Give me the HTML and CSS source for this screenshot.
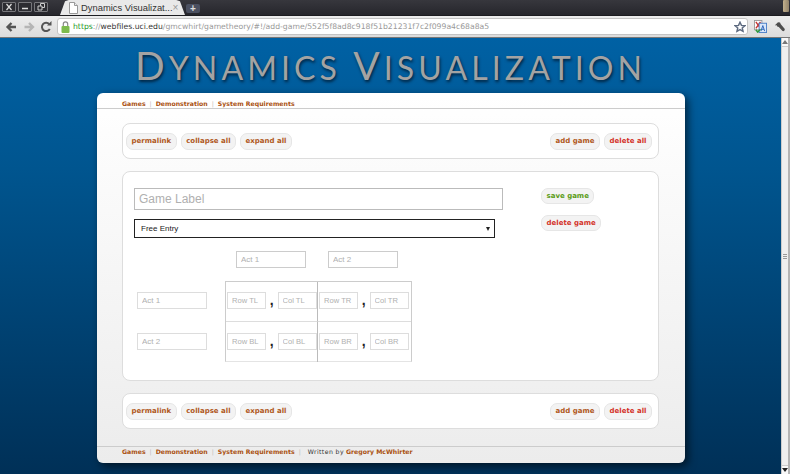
FILE: index.html
```html
<!DOCTYPE html>
<html lang="en">
<head>
    <meta charset="UTF-8">
    <meta name="viewport" content="width=device-width, initial-scale=1.0">
    <title>Dynamics Visualization</title>
    <link rel="stylesheet" href="styles.css">
</head>
<body>
    <div class="titlebar">
        <div class="window-buttons">
            <span class="win-btn">
                <svg width="12" height="8" viewBox="0 0 12 8"><path d="M3.500 1 8.500 7M8.500 1 3.500 7" stroke="#ddd" stroke-width="1.200"/></svg>
            </span>
            <span class="win-btn">
                <svg width="12" height="8" viewBox="0 0 12 8"><path d="M3 5.500h6" stroke="#ddd" stroke-width="1.500"/></svg>
            </span>
            <span class="win-btn">
                <svg width="12" height="8" viewBox="0 0 12 8"><path d="M5.500 .5h4v4h-4z" fill="none" stroke="#ccc"/><path d="M3 3h4v4H3z" fill="#2c2c31" stroke="#ccc"/></svg>
            </span>
        </div>
        <div class="tab">
            <svg class="tab-icon" width="9" height="12" viewBox="0 0 9 12"><path d="M.5.500h5l3 3v8h-8z" fill="#fff" stroke="#999"/><path d="M5.500.500v3h3" fill="#eee" stroke="#999"/></svg>
            <span class="tab-title">Dynamics Visualizat...</span>
            <span class="tab-close">&#215;</span>
        </div>
        <div class="new-tab">+</div>
        <div class="titlebar-grip"></div>
    </div>

    <div class="toolbar">
        <svg class="nav-icon" width="16" height="16" viewBox="0 0 16 16"><path d="M13 8H5M8.500 4 4.500 8l4 4" fill="none" stroke="#555" stroke-width="2.300"/></svg>
        <svg class="nav-icon" width="16" height="16" viewBox="0 0 16 16"><path d="M3.500 8h8M8 4l4 4-4 4" fill="none" stroke="#b5b5b5" stroke-width="2.300"/></svg>
        <svg class="nav-icon" width="16" height="16" viewBox="0 0 16 16"><path d="M11.800 10A4.200 4.200 0 1 1 11.200 5" fill="none" stroke="#555" stroke-width="2"/><path d="M9 6.500h4.500V2z" fill="#555"/></svg>
        <div class="omnibox">
            <svg class="lock" width="9" height="12" viewBox="0 0 9 12"><path d="M2.300 5V3a2.200 2.200 0 0 1 4.400 0v2" fill="none" stroke="#8a8a8a" stroke-width="1.200"/><rect x="0.500" y="5" width="8" height="7" rx="1" fill="#7dbb4d"/></svg>
            <span class="url"><span class="url-https">https</span>://<span class="url-host">webfiles.uci.edu</span>/gmcwhirt/gametheory/#!/add-game/552f5f8ad8c918f51b21231f7c2f099a4c68a8a5</span>
            <svg class="star" width="12" height="12" viewBox="0 0 15 15"><path d="M7.500 1.500 9.300 5.500l4.200.4-3.200 2.800 1 4.200-3.800-2.200-3.800 2.200 1-4.200L1.500 5.900l4.200-.4z" fill="#fff" stroke="#5d6a80" stroke-width="1.800"/></svg>
        </div>
        <svg class="ext-icon" width="13" height="13" viewBox="0 0 14 14"><rect x="0.500" y="0.500" width="8" height="10" fill="#fff" stroke="#999"/><path d="M2 2l5 7M7 2 2 9" stroke="#c8322d" stroke-width="1.500"/><rect x="5.500" y="3.500" width="8" height="10" fill="#d8e6fa" stroke="#4a7fc8"/><path d="M7.500 12 9.500 6l2 6M8.300 10h2.400" fill="none" stroke="#2a62b8"/><path d="M2 10.500l2 2.500 3-3" fill="none" stroke="#2f9a3c" stroke-width="1.600"/></svg>
        <svg class="wrench" width="12" height="12" viewBox="0 0 15 15"><path d="M1.500 5 5 1.500l2.500.5 1 2L13 9.500c1 1 .3 2-.2 2.600-.6.600-1.500 1.100-2.500.1L6 7.500l-2-.5-.5-2L2.500 6z" fill="#4d4d4d"/></svg>
    </div>

    <div class="viewport">
        <div class="page">
            <h1 class="site-title"><span class="cap">D</span>ynamics <span class="cap">V</span>isualization</h1>

            <div class="wrapper">
                <div class="top-nav">
                    <a>Games</a><span class="sep">|</span><a>Demonstration</a><span class="sep">|</span><a>System Requirements</a>
                </div>

                <div class="content">
                    <div class="panel action-bar">
                        <div class="btn-group">
                            <a class="btn">permalink</a>
                            <a class="btn">collapse all</a>
                            <a class="btn">expand all</a>
                        </div>
                        <div class="btn-group">
                            <a class="btn">add game</a>
                            <a class="btn btn-red">delete all</a>
                        </div>
                    </div>

                    <div class="panel game-panel">
                        <div class="game-form">
                            <input class="game-label" type="text" placeholder="Game Label">
                            <div class="game-select">
                                <span>Free Entry</span>
                                <span class="select-arrow"></span>
                            </div>

                            <div class="matrix">
                                <div></div>
                                <div class="col-heads">
                                    <input class="act-input" type="text" placeholder="Act 1">
                                    <input class="act-input" type="text" placeholder="Act 2">
                                </div>
                                <div class="row-heads">
                                    <input class="act-input" type="text" placeholder="Act 1">
                                    <input class="act-input" type="text" placeholder="Act 2">
                                </div>
                                <div class="payoffs">
                                    <div class="cell">
                                        <input class="pay-input" type="text" placeholder="Row TL"><span class="comma">,</span><input class="pay-input" type="text" placeholder="Col TL">
                                    </div>
                                    <div class="cell">
                                        <input class="pay-input" type="text" placeholder="Row TR"><span class="comma">,</span><input class="pay-input" type="text" placeholder="Col TR">
                                    </div>
                                    <div class="cell">
                                        <input class="pay-input" type="text" placeholder="Row BL"><span class="comma">,</span><input class="pay-input" type="text" placeholder="Col BL">
                                    </div>
                                    <div class="cell">
                                        <input class="pay-input" type="text" placeholder="Row BR"><span class="comma">,</span><input class="pay-input" type="text" placeholder="Col BR">
                                    </div>
                                </div>
                            </div>
                        </div>
                        <div class="game-actions">
                            <a class="btn btn-small btn-green">save game</a>
                            <a class="btn btn-small btn-red">delete game</a>
                        </div>
                    </div>

                    <div class="panel action-bar">
                        <div class="btn-group">
                            <a class="btn">permalink</a>
                            <a class="btn">collapse all</a>
                            <a class="btn">expand all</a>
                        </div>
                        <div class="btn-group">
                            <a class="btn">add game</a>
                            <a class="btn btn-red">delete all</a>
                        </div>
                    </div>
                </div>

                <div class="footer">
                    <a>Games</a><span class="sep">|</span><a>Demonstration</a><span class="sep">|</span><a>System Requirements</a><span class="sep">|</span><span class="written"><span class="written-by">Written by</span> <a>Gregory McWhirter</a></span>
                </div>
            </div>
        </div>

        <div class="scrollbar">
            <div class="scroll-btn"><span class="arrow-up"></span></div>
            <div class="scroll-track"><div class="scroll-grip"></div></div>
            <div class="scroll-btn scroll-btn-down"><span class="arrow-down"></span></div>
        </div>
    </div>
</body>
</html>
```

FILE: styles.css
```css
* {
    box-sizing: border-box;
}

html, body {
    margin: 0;
    height: 100%;
    overflow: hidden;
}

body {
    width: 790px;
    height: 474px;
    display: flex;
    flex-direction: column;
    font-family: "Liberation Sans", Arial, sans-serif;
    background: #2a2a30;
}

/* browser chrome */
.titlebar {
    height: 15px;
    display: flex;
    align-items: flex-end;
    background: linear-gradient(#37373d, #26262c);
}

.window-buttons {
    display: flex;
    gap: 2px;
    align-self: flex-start;
    margin: 2px 12px 0 2px;
}

.win-btn {
    width: 14px;
    height: 10px;
    border: 1px solid #77777b;
    border-radius: 1px;
    background: #2c2c31;
    display: flex;
}

.tab {
    width: 125px;
    height: 15px;
    display: flex;
    align-items: center;
    padding: 0 8px 0 9px;
    background: #e9e9e9;
    border-radius: 5px 5px 0 0;
    clip-path: polygon(0 100%, 4% 8%, 7% 0, 93% 0, 96% 8%, 100% 100%);
}

.tab-icon {
    flex: none;
}

.tab-title {
    margin-left: 3px;
    font-size: 9.400px;
    color: #333;
    white-space: nowrap;
}

.tab-close {
    margin-left: auto;
    color: #999;
    font-size: 10px;
}

.new-tab {
    width: 14px;
    height: 9px;
    margin: 0 0 2px 1px;
    border-radius: 2px;
    background: #4b5060;
    color: #ddd;
    font-size: 10px;
    font-weight: bold;
    line-height: 9px;
    text-align: center;
}

.titlebar-grip {
    width: 6px;
    height: 12px;
    margin: 0 1px 3px auto;
    border-radius: 1px;
    background: linear-gradient(90deg, #c2b08c, #92836a);
}

.toolbar {
    height: 23px;
    display: flex;
    align-items: center;
    background: linear-gradient(#ededed, #dcdcdc);
    border-top: 1px solid #1c1c20;
    border-bottom: 1px solid #777;
    padding-left: 3px;
}

.nav-icon {
    margin-right: 1.500px;
    flex: none;
}

.omnibox {
    width: 691px;
    height: 17px;
    display: flex;
    align-items: center;
    padding: 0 1px 0 3px;
    margin-left: 1.500px;
    background: #fff;
    border: 1px solid #c4c4c4;
    border-radius: 3px;
}

.lock {
    flex: none;
}

.url {
    margin-left: 3px;
    font-family: "DejaVu Sans", sans-serif;
    font-size: 7.700px;
    color: #999;
    white-space: nowrap;
}

.url-https {
    color: #2a9a2a;
}

.url-host {
    color: #333;
}

.star {
    margin-left: auto;
    flex: none;
}

.ext-icon {
    margin-left: 6px;
    flex: none;
}

.wrench {
    margin-left: 7px;
    flex: none;
}

/* page */
.viewport {
    height: 436px;
    display: flex;
}

.page {
    flex: 1;
    height: 436px;
    overflow: hidden;
    background: linear-gradient(#0061a4, #00558f 30%, #003057);
}

.site-title {
    margin: 0;
    height: 55px;
    padding-top: 5px;
    font-family: "Lato", "Open Sans", sans-serif;
    font-size: 32px;
    line-height: 44px;
    font-weight: 400;
    text-transform: uppercase;
    letter-spacing: 4.100px;
    text-align: center;
    color: #a3a3a3;
    text-shadow: 1px 2px 3px #00233f;
}

.cap {
    font-size: 39px;
}

.wrapper {
    width: 588px;
    height: 370px;
    margin-left: 97px;
    background: linear-gradient(#fff, #ececec);
    border-radius: 6px;
    box-shadow: 3px 3px 9px rgba(0, 0, 0, 0.6);
}

.top-nav, .footer {
    display: flex;
    align-items: center;
    padding-left: 25px;
    font-family: "DejaVu Sans", sans-serif;
    font-size: 6.200px;
    font-weight: bold;
    color: #a9500f;
}

.top-nav {
    height: 16px;
    padding-top: 6px;
    border-bottom: 1px solid #ccc;
}

.footer {
    height: 17px;
    padding-bottom: 7px;
    border-top: 1px solid #ccc;
}

.sep {
    margin: 0 4px;
    font-weight: normal;
    color: #bbb;
}

.written {
    margin-left: 3px;
    font-weight: normal;
    color: #333;
}

.written-by {
    letter-spacing: 0.400px;
}

.written a {
    font-weight: bold;
    color: #a9500f;
}

.content {
    height: 337px;
    padding: 14px 26px 0 25px;
    display: flex;
    flex-direction: column;
    gap: 12px;
}

.panel {
    background: #fff;
    border: 1px solid #ddd;
    border-radius: 8px;
}

.action-bar {
    height: 36px;
    flex: none;
    display: flex;
    justify-content: space-between;
    align-items: center;
    padding: 0 6px 0 3px;
}

.btn-group {
    display: flex;
    gap: 4px;
}

.btn {
    height: 17px;
    padding: 0 4.500px;
    display: flex;
    align-items: center;
    background: #f3f3f3;
    border: 1px solid #e6e6e6;
    border-radius: 7px;
    font-family: "DejaVu Sans", sans-serif;
    font-size: 7px;
    font-weight: bold;
    color: #b0581c;
}

.btn-red {
    color: #d3342a;
}

.btn-green {
    color: #5b9c16;
}

.btn-small {
    height: 16px;
}

.game-panel {
    height: 210px;
    flex: none;
    display: flex;
    padding: 16px 0 0 11px;
}

.game-form {
    width: 407px;
    flex: none;
}

.game-actions {
    display: flex;
    flex-direction: column;
    align-items: flex-start;
    gap: 11px;
}

.game-label {
    width: 369px;
    height: 22px;
    display: block;
    padding: 0 4px;
    border: 1px solid #bbb;
    font-family: "Liberation Sans", Arial, sans-serif;
    font-size: 12px;
}

input::placeholder {
    color: #b0b0b0;
    opacity: 1;
}

.game-select {
    width: 361px;
    height: 19px;
    margin-top: 9px;
    display: flex;
    justify-content: space-between;
    align-items: center;
    padding: 0 4px 0 6px;
    border: 1px solid #222;
    font-size: 8px;
    color: #222;
}

.select-arrow {
    border-left: 2px solid transparent;
    border-right: 2px solid transparent;
    border-top: 4px solid #222;
}

.matrix {
    display: grid;
    grid-template-columns: 88px 187px;
    grid-template-rows: 18px 92px;
    row-gap: 12px;
    margin: 13px 0 0 3px;
}

.col-heads {
    display: flex;
    padding-left: 11px;
    gap: 22px;
}

.row-heads {
    display: flex;
    flex-direction: column;
    justify-content: flex-start;
    padding-top: 11px;
    gap: 24px;
}

.act-input {
    width: 70px;
    height: 17px;
    padding: 0 4px;
    border: 1px solid #ddd;
    font-family: "Liberation Sans", Arial, sans-serif;
    font-size: 8px;
}

.col-heads .act-input {
    border-color: #ccc;
}

.payoffs {
    display: grid;
    grid-template-columns: 92px 1fr;
    grid-template-rows: 40px 40px;
    height: 81px;
    border: 1px solid #ccc;
    border-bottom-color: #e4e4e4;
}

.cell {
    display: flex;
    align-items: center;
    padding: 0 0 2px 1px;
}

.cell:nth-child(odd) {
    border-right: 1px solid #bbb;
}

.cell:nth-child(-n+2) {
    border-bottom: 1px solid #ddd;
}

.pay-input {
    width: 39px;
    height: 17px;
    padding: 0 4px;
    border: 1px solid #ddd;
    font-family: "Liberation Sans", Arial, sans-serif;
    font-size: 7.600px;
}

.comma {
    width: 11.500px;
    text-align: center;
    font-size: 14px;
    font-weight: bold;
    line-height: 17px;
    color: #222;
}

/* scrollbar */
.scrollbar {
    width: 9px;
    height: 100%;
    display: flex;
    flex-direction: column;
    background: #efefef;
    border-left: 1px solid #ccc;
    border-right: 2px solid #b4b4b4;
}

.scroll-btn {
    height: 9px;
    display: flex;
    align-items: center;
    justify-content: center;
    background: #f8f8f8;
    border-bottom: 1px solid #ccc;
}

.scroll-btn-down {
    border-top: 1px solid #ccc;
    border-bottom: none;
}

.scroll-track {
    flex: 1;
    display: flex;
    align-items: center;
    justify-content: center;
}

.scroll-grip {
    width: 4px;
    height: 5px;
    border-top: 1px solid #999;
    border-bottom: 1px solid #999;
    background: linear-gradient(#efefef 1px, #999 1px, #999 2px, #efefef 2px);
}

.arrow-up {
    border-left: 3px solid transparent;
    border-right: 3px solid transparent;
    border-bottom: 4px solid #777;
}

.arrow-down {
    border-left: 3px solid transparent;
    border-right: 3px solid transparent;
    border-top: 4px solid #222;
}
```
